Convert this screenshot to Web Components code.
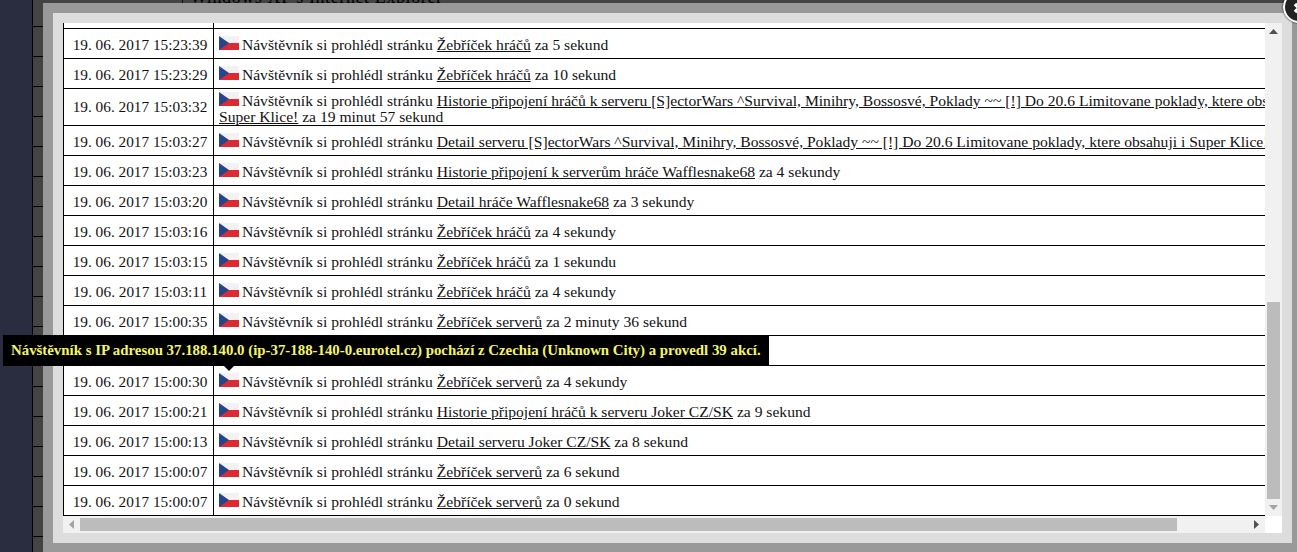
<!DOCTYPE html>
<html lang="cs">
<head>
<meta charset="utf-8">
<title>Historie návštěvníka</title>
<style>
  html, body { margin: 0; height: 100%; overflow: hidden; background: #444; }
  body { font: 15.6px/16px "Liberation Serif", "DejaVu Serif", serif; color: #111; }
</style>
</head>
<body>

<template id="page-backdrop-template">
  <style>
    :host { display: flex; height: 552px; overflow: hidden; }
    .side { flex: 0 0 32px; background: #292d3f; border-right: 1px solid #000; }
    .gutter {
      flex: 0 0 149px;
      background-color: #444;
      background-image: linear-gradient(#000 1px, transparent 1px);
      background-size: 100% 30px;
      background-position: 0 26px;
      border-right: 1px solid #111;
    }
    .main { flex: 1; background: #444; overflow: hidden; }
    .main p { margin: -11px 0 0 7px; font: 18px/17px "Liberation Serif", serif; color: #000; white-space: nowrap; letter-spacing: .6px; }
  </style>
  <div class="side"></div>
  <div class="gutter"></div>
  <div class="main"><p>Windows XP s Internet Explorer</p></div>
</template>

<template id="modal-frame-template">
  <style>
    /* okno lezi pres stranku, proto absolute */
    :host {
      display: block; position: absolute; left: 43px; top: 3px; width: 1219px; height: 510px;
      padding: 10px; background: #ddd; border: 10px solid #999; box-sizing: content-box;
    }
    .frame {
      display: grid; grid-template-columns: 1202px 17px; grid-template-rows: 493px 17px;
      width: 1219px; height: 510px;
    }
    .view { background: #fff; overflow: hidden; }
    .corner { background: #fff; }
  </style>
  <div class="frame">
    <div class="view"><slot></slot></div>
    <scroll-bar orient="v" offset="262" size="197"></scroll-bar>
    <scroll-bar orient="h" offset="0" size="1097"></scroll-bar>
    <div class="corner"></div>
  </div>
</template>

<template id="scroll-bar-template">
  <style>
    :host { display: flex; background: #f1f1f1; }
    :host([orient="v"]) { flex-direction: column; }
    .arrow { flex: 0 0 17px; display: flex; align-items: center; justify-content: center; }
    .track { flex: 1; display: flex; min-width: 0; min-height: 0; }
    :host([orient="v"]) .track { flex-direction: column; padding: 0 2px; }
    :host([orient="h"]) .track { padding: 2px 0; }
    .thumb { background: #bcbcbc; flex: none; }
    :host([orient="v"]) .thumb { width: 13px; }
    :host([orient="h"]) .thumb { height: 13px; }
    svg { display: block; }
  </style>
  <div class="arrow first"></div>
  <div class="track"><div class="thumb"></div></div>
  <div class="arrow last"></div>
</template>

<template id="log-row-template">
  <style>
    :host {
      display: grid; grid-template-columns: 149px 1px 1fr; min-height: 29px;
      border-bottom: 1px solid #000; white-space: nowrap;
    }
    .time { align-self: center; text-align: center; padding: 3px 0 0 3px; font-size: 15.3px; }
    :host([wrapped]) .time { padding-top: 0; }
    .line { background: #000; }
    .text { align-self: end; padding: 0 0 5px 5px; }
    :host([wrapped]) .text { padding: 4px 0 0 5px; }
    ::slotted(a) { color: #111; text-decoration: underline; }
    cz-flag { margin-right: -1px; }
  </style>
  <div class="time"></div>
  <div class="line"></div>
  <div class="text"><cz-flag></cz-flag> <slot></slot></div>
</template>

<template id="log-table-template">
  <style>
    :host { display: block; width: 1280px; border-left: 1px solid #000; }
    .stub { display: grid; grid-template-columns: 149px 1px; height: 5px; border-bottom: 1px solid #000; }
    .stub i { background: #000; grid-column: 2; }
  </style>
  <div class="stub"><i></i></div>
  <slot></slot>
</template>

<template id="cz-flag-template">
  <style>
    /* zaporny margin, aby vlajka nezvetsovala radek */
    :host { display: inline-block; width: 20px; height: 14px; margin-top: -4px; vertical-align: 0; }
    svg { display: block; }
  </style>
  <svg width="20" height="14" viewBox="0 0 20 14">
    <rect width="20" height="7" fill="#f3f1f3"/>
    <rect y="7" width="20" height="7" fill="#dc2a33"/>
    <path d="M0 0L10 7L0 14Z" fill="#23468c"/>
  </svg>
</template>

<template id="ip-tooltip-template">
  <style>
    /* tooltip lezi pres radek tabulky */
    :host {
      display: block; position: absolute; left: 3px; top: 335px; padding: 7px 8px; height: 17px;
      background: #000; color: #f5f56b; font: bold 14.85px/17px "Liberation Serif", serif; white-space: nowrap;
    }
    .tip {
      position: absolute; left: 221px; top: 100%; width: 0; height: 0;
      border: 5px solid transparent; border-top-color: #000; border-bottom: 0;
    }
  </style>
  <slot></slot><div class="tip"></div>
</template>

<template id="close-button-template">
  <style>
    :host {
      display: block; position: absolute; left: 1283px; top: -9px; width: 28px; height: 28px;
      background: #222; border: 2px solid #fff; border-radius: 50%; box-shadow: 0 0 2px #000;
    }
    svg { position: absolute; left: 8px; top: 9px; }
  </style>
  <svg width="14" height="14" viewBox="0 0 14 14"><path d="M2 2L10 10M10 2L2 10" stroke="#fff" stroke-width="3.5" fill="none"/></svg>
</template>

<page-backdrop></page-backdrop>

<modal-frame>
  <log-table>
    <log-row time="19. 06. 2017 15:23:39">Návštěvník si prohlédl stránku <a href="#">Žebříček hráčů</a> za 5 sekund</log-row>
    <log-row time="19. 06. 2017 15:23:29">Návštěvník si prohlédl stránku <a href="#">Žebříček hráčů</a> za 10 sekund</log-row>
    <log-row time="19. 06. 2017 15:03:32" wrapped>Návštěvník si prohlédl stránku <a href="#">Historie připojení hráčů k serveru [S]ectorWars ^Survival, Minihry, Bossosvé, Poklady ~~ [!] Do 20.6 Limitovane poklady, ktere obsahuji i<br>Super Klice!</a> za 19 minut 57 sekund</log-row>
    <log-row time="19. 06. 2017 15:03:27">Návštěvník si prohlédl stránku <a href="#">Detail serveru [S]ectorWars ^Survival, Minihry, Bossosvé, Poklady ~~ [!] Do 20.6 Limitovane poklady, ktere obsahuji i Super Klice!</a> za 4 sekundy</log-row>
    <log-row time="19. 06. 2017 15:03:23">Návštěvník si prohlédl stránku <a href="#">Historie připojení k serverům hráče Wafflesnake68</a> za 4 sekundy</log-row>
    <log-row time="19. 06. 2017 15:03:20">Návštěvník si prohlédl stránku <a href="#">Detail hráče Wafflesnake68</a> za 3 sekundy</log-row>
    <log-row time="19. 06. 2017 15:03:16">Návštěvník si prohlédl stránku <a href="#">Žebříček hráčů</a> za 4 sekundy</log-row>
    <log-row time="19. 06. 2017 15:03:15">Návštěvník si prohlédl stránku <a href="#">Žebříček hráčů</a> za 1 sekundu</log-row>
    <log-row time="19. 06. 2017 15:03:11">Návštěvník si prohlédl stránku <a href="#">Žebříček hráčů</a> za 4 sekundy</log-row>
    <log-row time="19. 06. 2017 15:00:35">Návštěvník si prohlédl stránku <a href="#">Žebříček serverů</a> za 2 minuty 36 sekund</log-row>
    <log-row time="" hidden-row></log-row>
    <log-row time="19. 06. 2017 15:00:30">Návštěvník si prohlédl stránku <a href="#">Žebříček serverů</a> za 4 sekundy</log-row>
    <log-row time="19. 06. 2017 15:00:21">Návštěvník si prohlédl stránku <a href="#">Historie připojení hráčů k serveru Joker CZ/SK</a> za 9 sekund</log-row>
    <log-row time="19. 06. 2017 15:00:13">Návštěvník si prohlédl stránku <a href="#">Detail serveru Joker CZ/SK</a> za 8 sekund</log-row>
    <log-row time="19. 06. 2017 15:00:07">Návštěvník si prohlédl stránku <a href="#">Žebříček serverů</a> za 6 sekund</log-row>
    <log-row time="19. 06. 2017 15:00:07">Návštěvník si prohlédl stránku <a href="#">Žebříček serverů</a> za 0 sekund</log-row>
  </log-table>
</modal-frame>

<ip-tooltip>Návštěvník s IP adresou 37.188.140.0 (ip-37-188-140-0.eurotel.cz) pochází z Czechia (Unknown City) a provedl 39 akcí.</ip-tooltip>
<close-button></close-button>

<script>
  // spolecny zaklad: shadow root z templatu podle jmena elementu
  class TemplateElement extends HTMLElement {
    constructor() {
      super();
      const shadowRoot = this.attachShadow({ mode: 'open' });
      const template = document.querySelector('#' + this.localName + '-template');
      shadowRoot.appendChild(template.content.cloneNode(true));
    }
  }

  class LogRow extends TemplateElement {
    connectedCallback() {
      this.shadowRoot.querySelector('.time').textContent = this.getAttribute('time');
      if (this.hasAttribute('hidden-row')) {
        this.shadowRoot.querySelector('cz-flag').remove();
      }
    }
  }

  class ScrollBar extends TemplateElement {
    connectedCallback() {
      const vertical = this.getAttribute('orient') === 'v';
      const thumb = this.shadowRoot.querySelector('.thumb');
      const offset = this.getAttribute('offset') + 'px';
      const size = this.getAttribute('size') + 'px';
      if (vertical) {
        thumb.style.marginTop = offset;
        thumb.style.height = size;
      } else {
        thumb.style.marginLeft = offset;
        thumb.style.width = size;
      }
      const paths = vertical ? ['M0 5L4.5 0L9 5Z', 'M0 0L9 0L4.5 5Z'] : ['M5 0L5 9L0 4.5Z', 'M0 0L5 4.5L0 9Z'];
      const colors = vertical ? ['#505050', '#a3a3a3'] : ['#a3a3a3', '#505050'];
      const w = vertical ? 9 : 5;
      const h = vertical ? 5 : 9;
      ['first', 'last'].forEach((name, i) => {
        this.shadowRoot.querySelector('.' + name).innerHTML =
          `<svg width="${w}" height="${h}" viewBox="0 0 ${w} ${h}"><path d="${paths[i]}" fill="${colors[i]}"/></svg>`;
      });
    }
  }

  customElements.define('page-backdrop', class extends TemplateElement {});
  customElements.define('modal-frame', class extends TemplateElement {});
  customElements.define('scroll-bar', ScrollBar);
  customElements.define('log-table', class extends TemplateElement {});
  customElements.define('log-row', LogRow);
  customElements.define('cz-flag', class extends TemplateElement {});
  customElements.define('ip-tooltip', class extends TemplateElement {});
  customElements.define('close-button', class extends TemplateElement {});
</script>
</body>
</html>
